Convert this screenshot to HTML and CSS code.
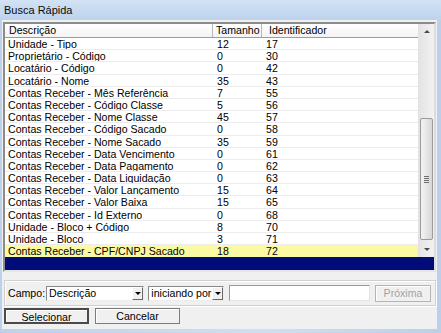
FILE: index.html
```html
<!DOCTYPE html>
<html lang="pt-BR">
<head>
    <meta charset="UTF-8">
    <title>Busca Rápida</title>
    <link rel="stylesheet" href="styles.css">
</head>
<body>

<div class="window">
    <div class="titlebar">Busca Rápida</div>

    <div class="client">
        <div class="grid">
            <div class="grid-top">
                <div class="grid-table">
                    <div class="grid-head">
                        <div class="cell col-desc">Descrição</div>
                        <div class="cell col-size">Tamanho</div>
                        <div class="cell col-id">Identificador</div>
                    </div>
                    <div class="grid-rows" id="gridRows"></div>
                </div>
                <div class="vscroll">
                    <div class="sb-btn sb-up"></div>
                    <div class="sb-track">
                        <div class="sb-thumb"><span class="grip"></span></div>
                    </div>
                    <div class="sb-btn sb-down"></div>
                </div>
            </div>
            <div class="grid-empty"></div>
        </div>

        <div class="search-box">
            <span class="label">Campo:</span>
            <div class="combo combo-field">
                <span class="combo-text">Descrição</span>
                <span class="combo-btn"></span>
            </div>
            <div class="combo combo-mode">
                <span class="combo-text">iniciando por</span>
                <span class="combo-btn"></span>
            </div>
            <input type="text" class="search-input">
            <div class="btn btn-disabled btn-next">Próxima</div>
        </div>

        <div class="actions">
            <div class="btn btn-default">Selecionar</div>
            <div class="btn">Cancelar</div>
        </div>
    </div>
</div>

<script>
    const fields = [
        ['Unidade - Tipo', 12, 17],
        ['Proprietário - Código', 0, 30],
        ['Locatário - Código', 0, 42],
        ['Locatário - Nome', 35, 43],
        ['Contas Receber - Mês Referência', 7, 55],
        ['Contas Receber - Código Classe', 5, 56],
        ['Contas Receber - Nome Classe', 45, 57],
        ['Contas Receber - Código Sacado', 0, 58],
        ['Contas Receber - Nome Sacado', 35, 59],
        ['Contas Receber - Data Vencimento', 0, 61],
        ['Contas Receber - Data Pagamento', 0, 62],
        ['Contas Receber - Data Liquidação', 0, 63],
        ['Contas Receber - Valor Lançamento', 15, 64],
        ['Contas Receber - Valor Baixa', 15, 65],
        ['Contas Receber - Id Externo', 0, 68],
        ['Unidade - Bloco + Código', 8, 70],
        ['Unidade - Bloco', 3, 71],
        ['Contas Receber - CPF/CNPJ Sacado', 18, 72]
    ];

    const rows = document.getElementById('gridRows');
    fields.forEach((f, i) => {
        const row = document.createElement('div');
        row.className = 'row' + (i === fields.length - 1 ? ' selected' : '');
        row.innerHTML =
            '<div class="cell col-desc">' + f[0] + '</div>' +
            '<div class="cell col-size">' + f[1] + '</div>' +
            '<div class="cell col-id">' + f[2] + '</div>';
        rows.appendChild(row);
    });
</script>

</body>
</html>
```

FILE: styles.css
```css
body {
    margin: 0;
    padding: 0;
    background-color: #c2d6ee;
    font-family: 'Liberation Sans', Arial, sans-serif;
    font-size: 10.6px;
    color: #000;
    overflow: hidden;
}
.window {
    width: 441px;
    height: 333px;
    display: flex;
    flex-direction: column;
    background: linear-gradient(to right, #bcd2ec, #cfdff2 60%, #bad0ea);
}
.titlebar {
    height: 20px;
    line-height: 20px;
    padding-left: 4px;
    font-size: 11px;
    color: #0a0a0a;
    background: linear-gradient(to bottom, #d3e2f4, #bdd3ec);
}
.client {
    margin: 0 4px 4px 2px;
    flex: 1;
    background-color: #f0f0f0;
    display: flex;
    flex-direction: column;
    padding: 2px 1px 0 1px;
}

/* grid */
.grid {
    height: 250px;
    box-sizing: border-box;
    border: 2px solid;
    border-color: #8c8c8c #dcdcdc #e6e6e6 #8c8c8c;
    display: flex;
    flex-direction: column;
    background-color: #fff;
}
.grid-top {
    display: flex;
}
.grid-table {
    flex: 1;
}
.grid-head {
    display: flex;
    height: 14px;
    box-sizing: border-box;
    border-bottom: 1px solid #9c9c9c;
    background: linear-gradient(to bottom, #ffffff, #f3f3f3);
}
.grid-head .cell {
    line-height: 13px;
    border-right: 1px solid #b9b9b9;
}
.grid-head .col-desc {
    padding-left: 4px;
}
.grid-head .col-size {
    padding-left: 3px;
}
.grid-head .col-id {
    padding-left: 7px;
    border-right: none;
}
.cell {
    box-sizing: border-box;
    white-space: nowrap;
    overflow: hidden;
    padding-left: 3px;
}
.col-desc {
    width: 208px;
}
.col-size {
    width: 49px;
    padding-left: 4px;
}
.col-id {
    flex: 1;
    padding-left: 4px;
}
.row {
    display: flex;
    height: 12.2px;
    box-sizing: border-box;
    border-bottom: 1px solid #ececec;
    line-height: 12px;
}
.row.selected {
    background-color: #fbfaa3;
    border-bottom: none;
}
.grid-empty {
    flex: 1;
    background-color: #020c78;
}

/* scrollbar */
.vscroll {
    width: 15px;
    display: flex;
    flex-direction: column;
    background: linear-gradient(to right, #e4e4e4, #f2f2f2);
    border-left: 1px solid #e2e2e2;
}
.sb-btn {
    height: 16px;
    position: relative;
}
.sb-btn::after {
    content: '';
    position: absolute;
    left: 5px;
    border-left: 3px solid transparent;
    border-right: 3px solid transparent;
}
.sb-up::after {
    top: 6px;
    border-bottom: 3px solid #4a4a4a;
}
.sb-down::after {
    top: 7px;
    border-top: 3px solid #4a4a4a;
}
.sb-track {
    flex: 1;
    display: flex;
    flex-direction: column;
    justify-content: flex-end;
    padding-bottom: 1px;
}
.sb-thumb {
    height: 122px;
    margin: 0 1px;
    box-sizing: border-box;
    border: 1px solid #9a9a9a;
    border-radius: 2px;
    background: linear-gradient(to right, #f4f4f4, #e6e6e6 50%, #d6d6d6);
    display: flex;
    align-items: center;
    justify-content: center;
}
.grip {
    width: 5px;
    height: 7px;
    background: repeating-linear-gradient(to bottom, #6e6e6e 0, #6e6e6e 1px, transparent 1px, transparent 2px);
}

/* search panel */
.search-box {
    margin: 8px 0 0 1px;
    height: 26px;
    box-sizing: border-box;
    border: 1px solid #d0d0d0;
    box-shadow: inset 1px 1px 0 #fff, 1px 1px 0 #fff;
    display: flex;
    align-items: center;
    padding: 0 4px 0 3px;
}
.label {
    margin-right: 1px;
}
.combo {
    height: 15px;
    box-sizing: border-box;
    border: 1px solid;
    border-color: #8a8a8a #ececec #ececec #8a8a8a;
    background-color: #fff;
    display: flex;
    align-items: center;
    margin-right: 4px;
}
.combo-text {
    flex: 1;
    padding-left: 2px;
    white-space: nowrap;
    overflow: hidden;
}
.combo-field {
    width: 100px;
}
.combo-mode {
    width: 77px;
}
.combo-btn {
    width: 11px;
    height: 13px;
    flex-shrink: 0;
    box-sizing: border-box;
    background-color: #f0f0f0;
    border: 1px solid;
    border-color: #fff #6a6a6a #6a6a6a #fff;
    position: relative;
}
.combo-btn::after {
    content: '';
    position: absolute;
    left: 2px;
    top: 4px;
    border-left: 3px solid transparent;
    border-right: 3px solid transparent;
    border-top: 3px solid #000;
}
.search-input {
    width: 141px;
    height: 16px;
    box-sizing: border-box;
    border: 1px solid;
    border-color: #9a9a9a #e4e4e4 #e4e4e4 #9a9a9a;
    background-color: #fff;
    margin: 0 5px 0 1px;
    padding: 0;
}
.btn {
    height: 16px;
    line-height: 14px;
    box-sizing: border-box;
    border: 1px solid #7c7c7c;
    box-shadow: inset 1px 1px 0 #fff;
    background-color: #f0f0f0;
    text-align: center;
}
.btn-next {
    width: 57px;
    height: 17px;
    line-height: 15px;
}
.btn-disabled {
    color: #a3a3a3;
    border-color: #b4b4b4;
}

/* bottom buttons */
.actions {
    display: flex;
    gap: 6px;
    margin-top: 2px;
    padding-left: 1px;
}
.actions .btn {
    width: 85px;
}
.btn-default {
    border: 2px solid #4a4a4a;
    width: 87px;
}
```
